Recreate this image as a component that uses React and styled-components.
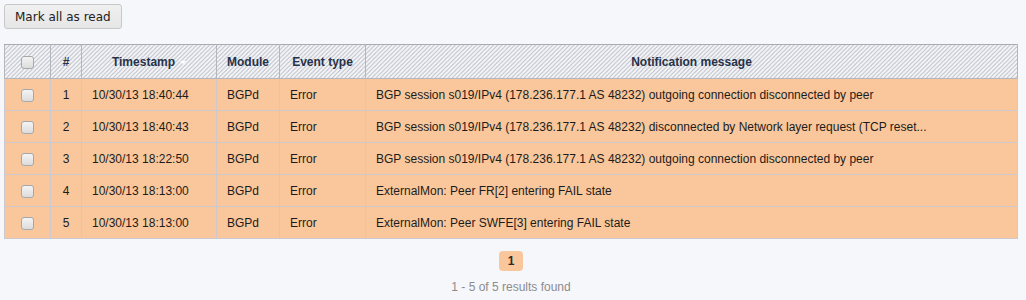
import React, { useState } from 'react';
import styled, { createGlobalStyle } from 'styled-components';

const GlobalStyle = createGlobalStyle`
  html, body {
    margin: 0;
    background: #f6f7fb;
  }
  body {
    font-family: "Liberation Sans", Arial, sans-serif;
  }
`;

const notifications = [
  { id: 1, time: '10/30/13 18:40:44', module: 'BGPd', type: 'Error', message: 'BGP session s019/IPv4 (178.236.177.1 AS 48232) outgoing connection disconnected by peer' },
  { id: 2, time: '10/30/13 18:40:43', module: 'BGPd', type: 'Error', message: 'BGP session s019/IPv4 (178.236.177.1 AS 48232) disconnected by Network layer request (TCP reset...' },
  { id: 3, time: '10/30/13 18:22:50', module: 'BGPd', type: 'Error', message: 'BGP session s019/IPv4 (178.236.177.1 AS 48232) outgoing connection disconnected by peer' },
  { id: 4, time: '10/30/13 18:13:00', module: 'BGPd', type: 'Error', message: 'ExternalMon: Peer FR[2] entering FAIL state' },
  { id: 5, time: '10/30/13 18:13:00', module: 'BGPd', type: 'Error', message: 'ExternalMon: Peer SWFE[3] entering FAIL state' },
];

const NotificationList = () => {
  const [checked, setChecked] = useState([]);

  const toggle = (id) => {
    setChecked((prev) => (prev.includes(id) ? prev.filter((x) => x !== id) : [...prev, id]));
  };

  return (
    <Page>
      <GlobalStyle />
      <Toolbar>
        <MarkButton type='button'>Mark all as read</MarkButton>
      </Toolbar>
      <Table>
        <colgroup>
          <col style={{ width: 46 }} />
          <col style={{ width: 31 }} />
          <col style={{ width: 135 }} />
          <col style={{ width: 63 }} />
          <col style={{ width: 86 }} />
          <col />
        </colgroup>
        <thead>
          <tr>
            <HeadCell><Check /></HeadCell>
            <HeadCell>#</HeadCell>
            <HeadCell>
              Timestamp<SortArrow />
            </HeadCell>
            <HeadCell>Module</HeadCell>
            <HeadCell>Event type</HeadCell>
            <HeadCell>Notification message</HeadCell>
          </tr>
        </thead>
        <tbody>
          {notifications.map((item) => (
            <Row key={item.id}>
              <Cell align='center'>
                <Check
                  checked={checked.includes(item.id)}
                  onChange={() => toggle(item.id)}
                />
              </Cell>
              <Cell align='center'>{item.id}</Cell>
              <Cell>{item.time}</Cell>
              <Cell>{item.module}</Cell>
              <Cell>{item.type}</Cell>
              <Cell>{item.message}</Cell>
            </Row>
          ))}
        </tbody>
      </Table>
      <Footer>
        <PageButton>1</PageButton>
        <Results>1 - 5 of 5 results found</Results>
      </Footer>
    </Page>
  );
};

const Check = ({ checked = false, onChange }) => (
  <CheckBox type='checkbox' checked={checked} onChange={onChange || (() => {})} />
);

const Page = styled.div`
  padding: 4px 8px 0 4px;
  width: 1014px;
`;

const Toolbar = styled.div`
  display: flex;
  margin-bottom: 15px;
`;

const MarkButton = styled.button`
  font-family: "DejaVu Sans", Verdana, sans-serif;
  font-size: 12px;
  color: #222;
  background: linear-gradient(#f0f0f0, #e6e6e6);
  border: 1px solid #c8c8c8;
  border-radius: 3px;
  height: 25px;
  padding: 0 10px;
  cursor: pointer;
`;

const Table = styled.table`
  width: 1014px;
  border-collapse: collapse;
  table-layout: fixed;
  border: 1px solid #a9abb2;
  font-size: 12px;
`;

const HeadCell = styled.th`
  height: 33px;
  padding: 0 6px;
  text-align: center;
  font-weight: bold;
  color: #26324a;
  border: 1px solid #b4b6bd;
  border-top-color: #a9abb2;
  background: repeating-linear-gradient(
    135deg,
    #f3f4f8 0px,
    #f3f4f8 2px,
    #c9cad0 2px,
    #c9cad0 3px
  );
  background-size: 4.24px 4.24px;
`;

const SortArrow = styled.span`
  display: inline-block;
  width: 0;
  height: 0;
  margin-left: 5px;
  vertical-align: middle;
  border-left: 3px solid transparent;
  border-right: 3px solid transparent;
  border-top: 3px solid #ffffff;
`;

const Row = styled.tr`
  background: #f9c79b;
`;

const Cell = styled.td`
  height: 31px;
  padding: 0 10px;
  color: #1c1c1c;
  text-align: ${(props) => props.align || 'left'};
  border: 1px solid #cdc9cf;
  white-space: nowrap;
  overflow: hidden;
`;

const CheckBox = styled.input`
  appearance: none;
  width: 13px;
  height: 13px;
  margin: 0;
  vertical-align: middle;
  border: 1px solid #a8a8a8;
  border-radius: 3px;
  background: linear-gradient(#f4f4f4, #dcdcdc);
  cursor: pointer;
  &:checked {
    background: linear-gradient(#d8e6f6, #b8cde6);
  }
`;

const Footer = styled.div`
  display: flex;
  flex-direction: column;
  align-items: center;
  padding-top: 12px;
`;

const PageButton = styled.div`
  min-width: 24px;
  height: 20px;
  line-height: 20px;
  text-align: center;
  font-size: 12px;
  font-weight: bold;
  color: #2a2a2a;
  background: #f9c79b;
  border-radius: 4px;
`;

const Results = styled.div`
  margin-top: 9px;
  font-size: 12px;
  color: #8c8c8c;
`;

export default NotificationList;
